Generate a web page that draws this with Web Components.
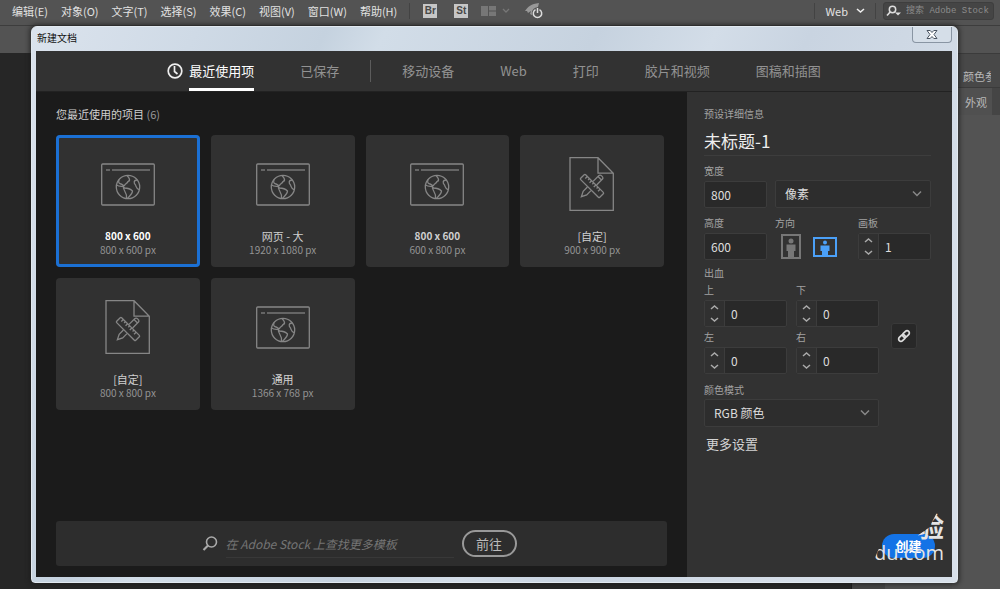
<!DOCTYPE html>
<html lang="zh-CN">
<head>
<meta charset="utf-8">
<title>新建文档</title>
<style>
html,body{height:100%}
body{margin:0;background:#262626;font-family:"Noto Sans CJK SC","Open Sans",sans-serif;color:#ccc;overflow:hidden}
</style>
</head>
<body>
<app-shell>
  <app-menubar slot="menu"></app-menubar>
  <side-panels slot="side"></side-panels>
  <new-document-dialog slot="dialog" heading="新建文档">
    <category-tabs slot="tabs"></category-tabs>
    <preset-browser slot="browser">
      <preset-card kind="web" name="800 x 600" size="800 x 600 px" strong selected></preset-card>
      <preset-card kind="web" name="网页 - 大" size="1920 x 1080 px"></preset-card>
      <preset-card kind="web" name="800 x 600" size="600 x 800 px" strong></preset-card>
      <preset-card kind="doc" name="[自定]" size="900 x 900 px"></preset-card>
      <preset-card kind="doc" name="[自定]" size="800 x 800 px"></preset-card>
      <preset-card kind="web" name="通用" size="1366 x 768 px"></preset-card>
    </preset-browser>
    <preset-details slot="details"></preset-details>
  </new-document-dialog>
</app-shell>
<script>
const define = (name, html, setup) => {
  const template = document.createElement('template');
  template.innerHTML = html;
  customElements.define(name, class extends HTMLElement {
    constructor() {
      super();
      this.attachShadow({mode: 'open'}).append(template.content.cloneNode(true));
    }
    connectedCallback() { if (setup) setup(this, this.shadowRoot); }
  });
};

const reset = `:host,*{box-sizing:border-box} button,input,select{font:inherit;color:inherit;margin:0;outline:0} button{padding:0;background:none;border:0} a{color:inherit;text-decoration:none} svg{display:block;fill:none;flex:none}`;

define('app-shell', `<style>${reset}
:host{display:flex;flex-direction:column;position:relative;height:100vh;overflow:hidden}
.options{height:28px;flex:none;background:#535353;border-top:1px solid #3d3d3d}
.work{flex:1;display:flex;justify-content:flex-end;align-items:stretch;min-height:0;background:#262626}
.strip{align-self:flex-end;width:101px;height:6px;background:linear-gradient(90deg,#454545 33px,#505050 33px);border-left:1px solid #1c1c1c}
.dialog{position:absolute;inset:26px 42px 6px 31px;display:flex}
::slotted(*){flex:1}
::slotted([slot=menu]),::slotted([slot=side]){flex:none}
</style>
<slot name="menu"></slot><div class="options"></div>
<div class="work"><div class="strip"></div><slot name="side"></slot></div>
<div class="dialog"><slot name="dialog"></slot></div>`);

define('app-menubar', `<style>${reset}
:host{display:flex;align-items:center;height:25px;padding:0 6px 4px 12px;background:#535353;font-size:11px;line-height:16px;color:#e2e2e2;justify-content:space-between}
nav,.tools,.right{display:flex;align-items:center}
nav{gap:13px}
nav a{white-space:nowrap}
.rule{width:1px;height:16px;background:#434343}
.app{width:14px;height:14px;background:#c6c6c6;color:#484848;font:bold 10px/14px "Liberation Sans",sans-serif;text-align:center}
.tools{gap:17px;flex:1}
.tools .rule{margin:0 -4px 0 12px}
.view{display:flex;gap:6px;margin:0 -2px 0 -4px}
.ws{display:flex;align-items:center;gap:8px;margin:0 10px}
label{display:flex;align-items:center;gap:4px;width:111px;height:18px;margin-left:7px;padding-left:2px;background:#454545;border:1px solid #3e3e3e;border-radius:3px}
input{width:88px;border:0;padding:0;background:none;font:9px/14px "Liberation Mono","Noto Sans CJK SC",monospace}
input::placeholder{color:#8c8c8c;opacity:1}
</style>
<nav><a href="#edit">编辑(E)</a><a href="#object">对象(O)</a><a href="#type">文字(T)</a><a href="#select">选择(S)</a><a href="#effect">效果(C)</a><a href="#view">视图(V)</a><a href="#window">窗口(W)</a><a href="#help">帮助(H)</a></nav>
<div class="tools"><span class="rule"></span><button class="app">Br</button><button class="app">St</button>
<button class="view" aria-label="排列文档"><svg width="15" height="10"><path fill="#777" d="M0 0h7v10H0zM8 0h7v4.500H8zM8 5.500h7V10H8z"/></svg><svg width="8" height="10"><path d="M1 3l3 3 3-3" stroke="#777" stroke-width="1.300"/></svg></button>
<button aria-label="GPU 性能"><svg width="18" height="16" viewBox="0 0 18 16"><path fill="#989898" d="M0 8C3 3.500 6 1 14 0L13 4l-4 3-2 5-2-1 1-3-3 2-1-2z"/><circle cx="12.500" cy="10" r="5.700" fill="#535353"/><path d="M10.500 6.700a4.200 4.200 0 1 0 4 0M12.500 5v5" stroke="#ddd" stroke-width="1.500"/></svg></button></div>
<div class="right"><span class="rule"></span><button class="ws">Web <svg width="9" height="7"><path d="M1 2l3.500 3L8 2" stroke="#eee" stroke-width="1.600"/></svg></button><span class="rule"></span>
<label><svg width="16" height="12" viewBox="0 0 16 12"><circle cx="6.500" cy="4.500" r="3.200" stroke="#ddd" stroke-width="1.500"/><path d="M4.200 7L1 10.500" stroke="#ddd" stroke-width="1.700"/><path fill="#ddd" d="M9 7.500h6l-3 3z"/></svg><input placeholder="搜索 Adobe Stock" aria-label="搜索 Adobe Stock"></label></div>`);

define('side-panels', `<style>${reset}
:host{display:block;width:48px;background:#535353;font-size:11px;line-height:16px;color:#b8b8b8}
button{display:block;width:100%;padding:0 0 0 11px;text-align:left;white-space:nowrap;overflow:hidden;background:#484848;border-top:1px solid #3b3b3b}
.a{height:34px;padding-top:10px}
.b{height:28px;padding-left:13px;background:linear-gradient(90deg,#505050 40px,#454545 40px)}
span{display:block;width:28px;overflow:hidden}
</style><button class="a"><span>颜色参考</span></button><button class="b">外观</button>`);

define('new-document-dialog', `<style>${reset}
:host{display:flex;flex-direction:column;min-width:0;padding:0 5px 5px 4px;border-radius:6px 6px 4px 4px;background:linear-gradient(115deg,#dbe3ed 0,#cfdae6 14%,#c5d2df 25%,#d2dde8 30%,#c6d2df 48%,#d3dde8 58%,#c9d4e1 66%,#d8e0ea 90%);border:1px solid #e2e9f0;box-shadow:0 0 4px 2px #1b1b1b99}
header{display:flex;justify-content:space-between;height:24px;flex:none;font-size:10px;line-height:22px;color:#111}
h1{font:inherit;margin:0 0 0 1px}
.close{width:40px;height:16px;border:1px solid #8995a3;border-top:0;border-radius:0 0 4px 4px;display:grid;place-items:center;background:#d5dee8}
.frame{flex:1;min-height:0;display:grid;grid-template:41px minmax(0,1fr)/minmax(0,1fr) 265px;background:#323232}
.tabs{grid-column:1/3;border-bottom:1px solid #222;display:grid}
.main{background:#1b1b1b;display:grid}
.side{display:grid}
</style>
<header><h1></h1><button class="close" aria-label="关闭"><svg width="12" height="9" viewBox="0 0 12 9"><path d="M1 .500h3.200L6 2.500 7.800.500H11L8 4.500l3 4H7.800L6 6.500l-1.800 2H1l3-4z" fill="#fff" stroke="#4b5562"/></svg></button></header>
<div class="frame"><div class="tabs"><slot name="tabs"></slot></div><div class="main"><slot name="browser"></slot></div><div class="side"><slot name="details"></slot></div></div>`,
(host, root) => { root.querySelector('h1').textContent = host.getAttribute('heading'); });

define('category-tabs', `<style>${reset}
:host{display:block;font-size:13px;line-height:20px;color:#929292}
nav{display:flex;justify-content:center;gap:46px;height:40px}
a{display:flex;align-items:center;white-space:nowrap}
.on{color:#fff;gap:6px}
.on span{display:flex;align-items:center;height:100%;border-bottom:3px solid #fff;padding-top:3px}
i{width:1px;height:22px;background:#5c5c5c;align-self:center;margin:0 -15px}
</style><nav><a class="on" href="#recent"><svg width="16" height="16"><circle cx="8" cy="8" r="6.800" stroke="#eee" stroke-width="1.700"/><path d="M7.500 3v5.500l3 2.500" stroke="#eee" stroke-width="1.700"/></svg><span>最近使用项</span></a><a href="#saved">已保存</a><i></i><a href="#mobile">移动设备</a><a href="#web">Web</a><a href="#print">打印</a><a href="#film">胶片和视频</a><a href="#art">图稿和插图</a></nav>`);

define('preset-browser', `<style>${reset}
:host{display:flex;flex-direction:column;padding:12px 20px 11px 20px;min-width:0}
h2{font-size:11px;line-height:20px;font-weight:400;margin:0 0 11px;color:#cfcfcf}
h2 span{color:#989898}
.cards{display:grid;grid-template-columns:repeat(4,minmax(0,1fr));gap:11px;margin-right:3px}
form{display:flex;align-items:center;justify-content:center;height:45px;margin-top:auto;padding-right:5px;background:#2d2d2d;border-radius:3px}
svg{margin-right:8px}
input{width:228px;height:29px;padding:0;border:0;border-bottom:1px solid #383838;background:none;font-size:12px;font-style:italic}
input::placeholder{color:#747474;opacity:1}
button{width:55px;height:27px;margin-left:8px;border:2px solid #999;border-radius:14px;font-size:13px;line-height:20px;color:#bbb}
</style>
<h2>您最近使用的项目 <span>(6)</span></h2><div class="cards"><slot></slot></div>
<form><svg width="16" height="16"><circle cx="9.500" cy="6" r="5" stroke="#aaa" stroke-width="1.600"/><path d="M6 9.500L1.500 14" stroke="#aaa" stroke-width="2.200"/></svg><input placeholder="在 Adobe Stock 上查找更多模板" aria-label="在 Adobe Stock 上查找更多模板"><button type="button">前往</button></form>`);

const art = {
  web: `<svg width="54" height="54" viewBox="0 0 54 54" stroke="#868686" stroke-width="1.300"><rect x=".7" y="7" width="52.600" height="41" rx="1"/><path d="M5 13h4M11 13h38" stroke="#777"/><circle cx="27" cy="30" r="11.700"/><path d="M18 22.500c-1 3 0 4 2 4.500s2 2 3.500 1.500c1-2 3-2 3.500-4 3-1 1-4-1-6M15.500 28c3 2 5 1 7 1.500l1 1.500c3 0 6 1 8 3 0 3-3 5-5 7.500M22.500 30c-1 3 4 5 3 11.500M36.500 23c-4 0-4 3-2 5 1 2 0 3 4 5"/></svg>`,
  doc: `<svg width="54" height="54" viewBox="0 0 54 54" stroke="#868686" stroke-width="1.300"><path d="M5 .700h28l15.300 15.500V53.300H5zM33 .700V16.200h15.300"/><g transform="translate(27 29) rotate(-45)"><path d="M4-2.500h8q2 0 2 2.500t-2 2.500H4M-4-2.500h-6L-15 0l5 2.500h6M11-2.500v5"/></g><g transform="translate(27 29) rotate(45)"><rect x="-13.500" y="-3.500" width="27" height="7" rx="1"/><path d="M-10-3.500v3M-7-3.500v2M-4-3.500v3M-1-3.500v2M2-3.500v3M5-3.500v2M8-3.500v3"/></g></svg>`
};
define('preset-card', `<style>${reset}
:host{display:block;min-width:0}
button{display:flex;flex-direction:column;align-items:center;width:100%;height:132px;padding-top:22px;background:#313131;border-radius:4px;text-align:center}
:host([selected]) button{box-shadow:inset 0 0 0 3px #1b70d4}
b{font-size:11px;line-height:14px;font-weight:400;margin-top:18px;color:#d0d0d0}
:host([strong]) b{font-weight:700;font-size:10px}
:host([selected]) b{color:#fff}
small{font-size:10px;line-height:14px;color:#949494}
</style><button><span class="art"></span><b></b><small></small></button>`, (host, root) => {
  root.querySelector('.art').innerHTML = art[host.getAttribute('kind')];
  root.querySelector('b').textContent = host.getAttribute('name');
  root.querySelector('small').textContent = host.getAttribute('size');
});

define('number-stepper', `<style>${reset}
:host{display:block;min-width:0}
label{display:block;font-size:10px;line-height:16px;margin-bottom:2px;color:#a2a2a2}
.box{display:flex;height:27px;border:1px solid #3c3c3c;background:#292929;border-radius:2px}
.arrows{display:flex;flex-direction:column;justify-content:space-around;width:20px;background:#303030;border-right:1px solid #3c3c3c;align-items:center}
:host([plain]) .arrows{display:none}
input{flex:1;width:0;min-width:0;border:0;background:none;padding:0 0 0 6px;font-size:12px;color:#ddd}
</style><label for="n"></label><div class="box"><span class="arrows"><button aria-label="增加"><svg width="9" height="6"><path d="M1 5l3.500-3L8 5" stroke="#aaa" stroke-width="1.500"/></svg></button><button aria-label="减少"><svg width="9" height="6"><path d="M1 1l3.500 3L8 1" stroke="#aaa" stroke-width="1.500"/></svg></button></span><input id="n"></div>`, (host, root) => {
  root.querySelector('label').textContent = host.getAttribute('label');
  root.querySelector('input').value = host.getAttribute('value');
});

define('drop-down', `<style>${reset}
:host{display:block;position:relative;min-width:0}
select{display:block;appearance:none;width:100%;height:28px;padding:0 9px;border:1px solid #3c3c3c;border-radius:2px;background:#2d2d2d;font-size:12px;color:#ddd}
svg{position:absolute;right:9px;top:10px;pointer-events:none}
</style><select><option></option></select><svg width="10" height="8"><path d="M1 1.500l4 4 4-4" stroke="#888" stroke-width="1.500"/></svg>`, (host, root) => {
  root.querySelector('option').textContent = host.getAttribute('value');
  root.querySelector('select').setAttribute('aria-label', host.getAttribute('label'));
});

define('preset-details', `<style>${reset}
:host{display:flex;flex-direction:column;position:relative;padding:12px 21px 0 17px;font-size:10px;line-height:16px;color:#a2a2a2;min-width:0}
h2,p{font:inherit;margin:0}
.title{height:32px;margin-bottom:7px;padding:2px 0 0;border:0;border-bottom:1px solid #3d3d3d;background:none;font-size:17px;color:#eee;width:100%}
h2{line-height:20px}
.row{display:grid;grid-template-columns:63px minmax(0,1fr);gap:8px;align-items:end}
.size{grid-template-columns:63px 64px minmax(0,1fr) 73px;margin-top:7px}
.orient{display:flex;align-items:center;gap:12px;height:27px;margin-top:2px;padding-left:6px}
.bleed-title{margin-top:4px;line-height:18px}
.bleed{display:flex;align-items:center;gap:12px}
.grid{display:grid;grid-template-columns:83px 83px;gap:2px 9px}
.link{width:26px;height:26px;background:#282828;border:1px solid #393939;border-radius:3px;display:grid;place-items:center;margin-top:16px}
.mode-title{margin:8px 0 1px}
.mode{width:175px}
.more{align-self:flex-start;margin:7px 0 0 2px;font-size:13px;line-height:20px;color:#d4d4d4}
.create{position:absolute;right:17px;bottom:19px;width:53px;height:24px;border-radius:12px;background:#1473e6;color:#fff;font-size:13px;font-weight:700;line-height:20px}
.mark{position:absolute;right:8px;bottom:11px;color:#e4e4e4;pointer-events:none;display:flex;flex-direction:column;align-items:flex-end}
.mark span{font:20px/26px "Open Sans",sans-serif;clip-path:polygon(100% 0,100% 100%,0 100%,0 76%,12% 0)}
.mark b{font-size:27px;line-height:28px;clip-path:polygon(100% 0,100% 100%,0 100%,0 86%,45% 55%,75% 0)}
</style>
<h2>预设详细信息</h2>
<input class="title" value="未标题-1" aria-label="名称">
<div class="row"><number-stepper plain label="宽度" value="800"></number-stepper><drop-down label="单位" value="像素"></drop-down></div>
<div class="row size"><number-stepper plain label="高度" value="600"></number-stepper>
<div><p>方向</p><div class="orient"><button aria-label="纵向"><svg width="20" height="25"><path d="M1 1h18v23H1z" stroke="#777" stroke-width="2"/><circle cx="10" cy="7" r="2.500" fill="#777"/><path fill="#777" d="M5.500 10.500h9V17H13v6H7v-6H5.500z"/></svg></button><button aria-label="横向"><svg width="24" height="20"><path d="M1 1h22v18H1z" stroke="#4ba0f8" stroke-width="2"/><circle cx="12" cy="5.500" r="2" fill="#4ba0f8"/><path fill="#4ba0f8" d="M7.500 8.500h9V14H15v5H9v-5H7.500z"/></svg></button></div></div><span></span>
<number-stepper label="画板" value="1"></number-stepper></div>
<p class="bleed-title">出血</p>
<div class="bleed"><div class="grid"><number-stepper label="上" value="0"></number-stepper><number-stepper label="下" value="0"></number-stepper><number-stepper label="左" value="0"></number-stepper><number-stepper label="右" value="0"></number-stepper></div><button class="link" aria-label="链接"><svg width="14" height="14" viewBox="0 0 14 14" stroke="#ddd" stroke-width="1.700"><rect x="-3.800" y="-2.300" width="7.600" height="4.600" rx="2.300" transform="translate(9 5) rotate(-45)"/><rect x="-3.800" y="-2.300" width="7.600" height="4.600" rx="2.300" transform="translate(5 9) rotate(-45)"/></svg></button></div>
<p class="mode-title">颜色模式</p>
<drop-down class="mode" label="颜色模式" value="RGB 颜色"></drop-down>
<a class="more" href="#more">更多设置</a>
<button class="create">创建</button>
<div class="mark"><b>验</b><span>du.com</span></div>`);
</script>
</body>
</html>
